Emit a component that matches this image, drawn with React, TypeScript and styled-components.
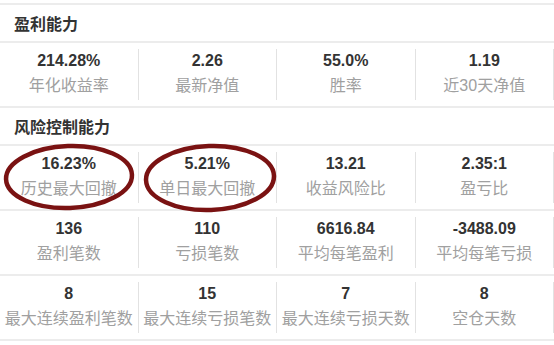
import * as React from 'react';
import styled, { createGlobalStyle } from 'styled-components';

const GlobalStyle = createGlobalStyle`
    html, body {
        margin: 0;
        padding: 0;
        background: #fff;
    }
    body {
        font-family: "Liberation Sans", "Noto Sans CJK SC", sans-serif;
    }
`;

interface Stat {
    value: string;
    label: string;
}

interface Section {
    title: string;
    rows: Stat[][];
}

const sections: Section[] = [
    {
        title: '盈利能力',
        rows: [
            [
                { value: '214.28%', label: '年化收益率' },
                { value: '2.26', label: '最新净值' },
                { value: '55.0%', label: '胜率' },
                { value: '1.19', label: '近30天净值' },
            ],
        ],
    },
    {
        title: '风险控制能力',
        rows: [
            [
                { value: '16.23%', label: '历史最大回撤' },
                { value: '5.21%', label: '单日最大回撤' },
                { value: '13.21', label: '收益风险比' },
                { value: '2.35:1', label: '盈亏比' },
            ],
            [
                { value: '136', label: '盈利笔数' },
                { value: '110', label: '亏损笔数' },
                { value: '6616.84', label: '平均每笔盈利' },
                { value: '-3488.09', label: '平均每笔亏损' },
            ],
            [
                { value: '8', label: '最大连续盈利笔数' },
                { value: '15', label: '最大连续亏损笔数' },
                { value: '7', label: '最大连续亏损天数' },
                { value: '8', label: '空仓天数' },
            ],
        ],
    },
];

// hand-drawn red circles around the two drawdown figures
const Marks: React.FC = () => (
    <MarkLayer width="554" height="345" viewBox="0 0 554 345">
        <ellipse cx="69" cy="177" rx="63" ry="31" transform="rotate(-2 69 177)" />
        <ellipse cx="210" cy="178" rx="64" ry="32" transform="rotate(-2 210 178)" />
    </MarkLayer>
);

export default function App() {
    return (
        <>
            <GlobalStyle />
            <Page>
                {sections.map(section => (
                    <React.Fragment key={section.title}>
                        <Title>{section.title}</Title>
                        {section.rows.map((row, i) => (
                            <Row key={i}>
                                {row.map(stat => (
                                    <Cell key={stat.label}>
                                        <Value>{stat.value}</Value>
                                        <Label>{stat.label}</Label>
                                    </Cell>
                                ))}
                            </Row>
                        ))}
                    </React.Fragment>
                ))}
                <Marks />
            </Page>
        </>
    );
}

const Page = styled.div`
    position: relative;
    width: 554px;
    height: 345px;
    padding-top: 3px;
    box-sizing: border-box;
    overflow: hidden;

    & > :last-of-type {
        border-bottom: 2px solid #ececec;
    }
`;

const Title = styled.div`
    height: 36px;
    border-top: 2px solid #ececec;
    padding-left: 14px;
    display: flex;
    align-items: center;
    font-size: 16px;
    font-weight: bold;
    color: #333;
`;

const Row = styled.div`
    display: grid;
    grid-template-columns: repeat(4, 1fr);
    height: 63px;
    border-top: 2px solid #ececec;
`;

const Cell = styled.div`
    margin: 6px 0;
    border-right: 1px solid #e2e2e2;
    display: flex;
    flex-direction: column;
    align-items: center;
    justify-content: center;
    white-space: nowrap;
`;

const Value = styled.div`
    font-size: 16px;
    font-weight: bold;
    color: #333;
    line-height: 22px;
`;

const Label = styled.div`
    font-size: 16px;
    color: #a0a0a0;
    line-height: 28px;
`;

const MarkLayer = styled.svg`
    position: absolute;
    left: 0;
    top: 0;
    pointer-events: none;

    ellipse {
        fill: none;
        stroke: #7a1212;
        stroke-width: 4.5;
    }
`;
